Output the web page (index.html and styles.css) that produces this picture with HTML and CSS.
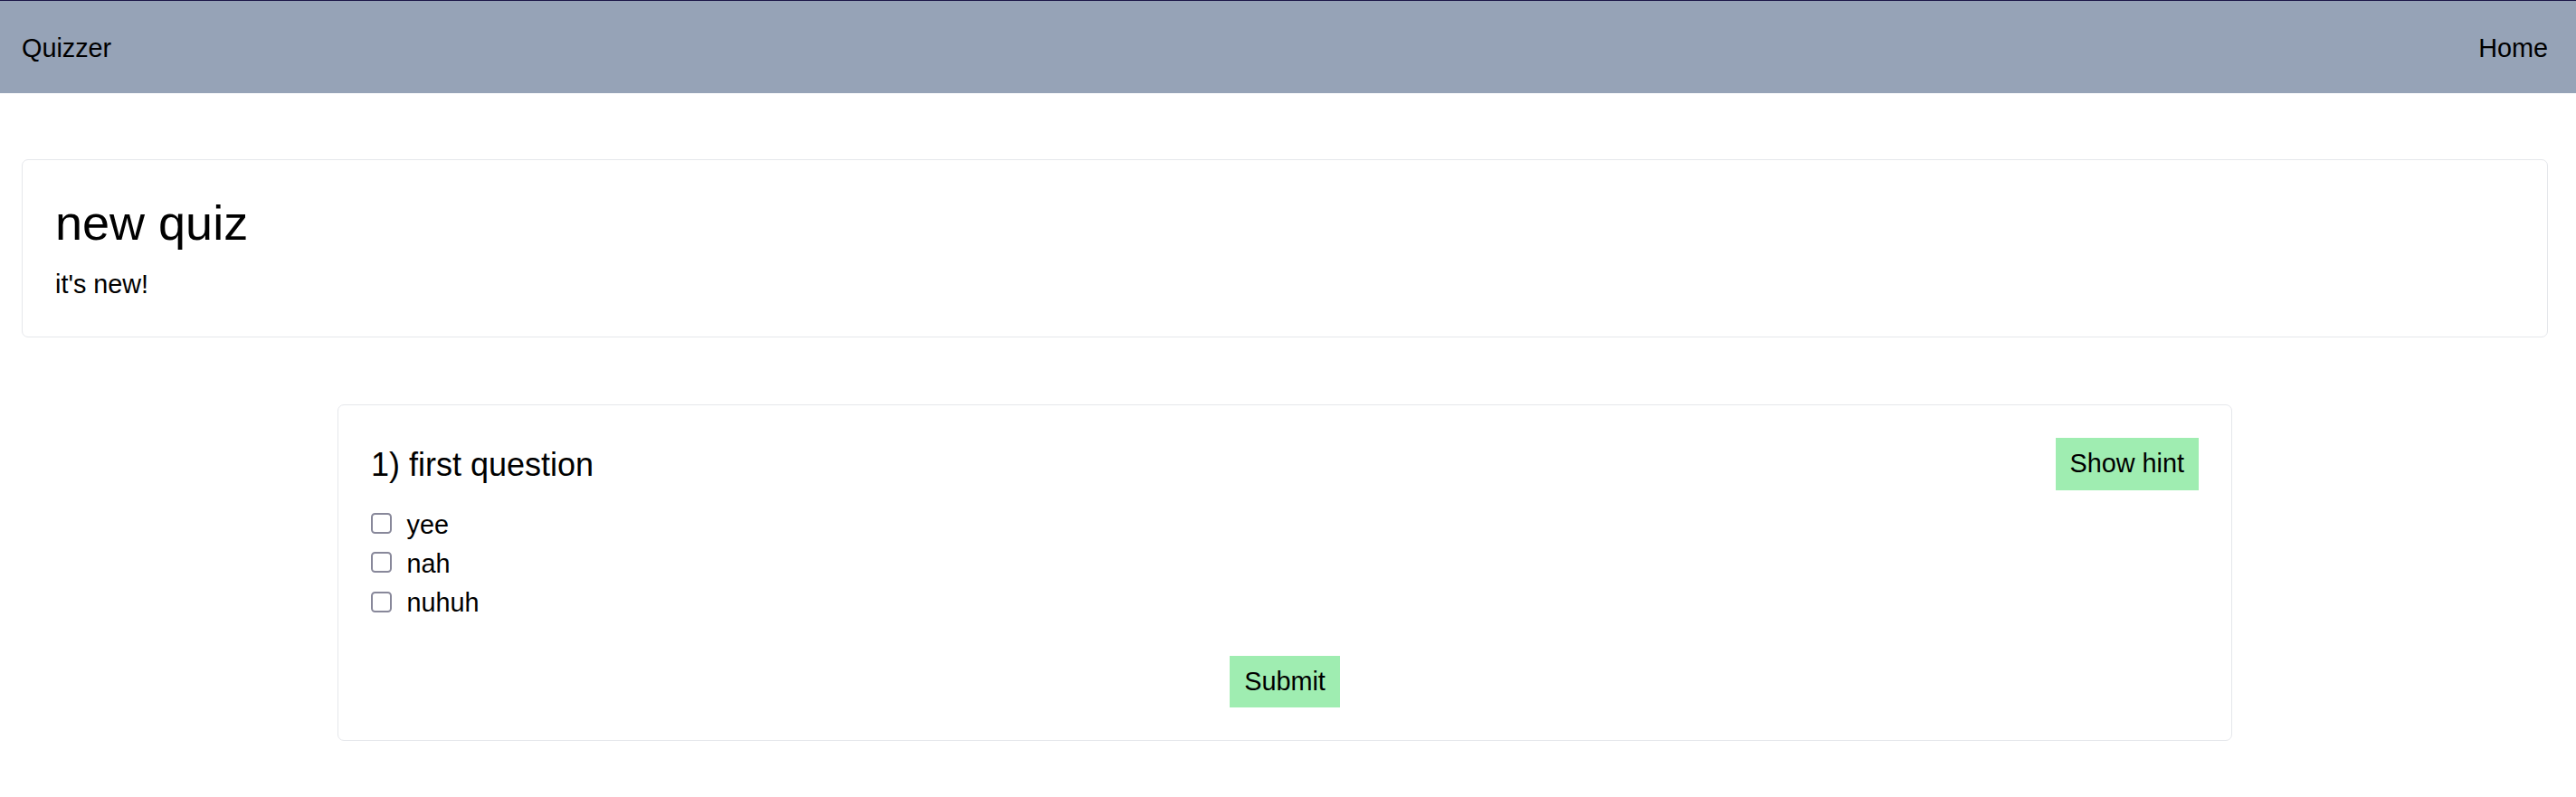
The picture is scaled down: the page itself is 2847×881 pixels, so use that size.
FILE: index.html
```
<!DOCTYPE html>
<html lang="en">
<head>
<meta charset="utf-8">
<title>Quizzer</title>
<link rel="stylesheet" href="styles.css">
</head>
<body>
<nav class="navbar">
  <a class="brand" href="#">Quizzer</a>
  <a class="nav-link" href="#">Home</a>
</nav>
<main class="page">
  <section class="quiz-card">
    <h1 class="quiz-title">new quiz</h1>
    <p class="quiz-desc">it's new!</p>
  </section>
  <section class="question-card">
    <div class="question-head">
      <h2 class="question-title">1) first question</h2>
      <button class="btn" type="button">Show hint</button>
    </div>
    <ul class="options">
      <li><label class="option"><input class="check" type="checkbox"><span>yee</span></label></li>
      <li><label class="option"><input class="check" type="checkbox"><span>nah</span></label></li>
      <li><label class="option"><input class="check" type="checkbox"><span>nuhuh</span></label></li>
    </ul>
    <div class="actions">
      <button class="btn" type="button">Submit</button>
    </div>
  </section>
</main>
</body>
</html>
```
FILE: styles.css
```
* {
  box-sizing: border-box;
}

html, body {
  margin: 0;
  padding: 0;
  background: #ffffff;
}

body {
  font-family: "Liberation Sans", Arial, sans-serif;
  font-size: 28.8px;
  line-height: 43.2px;
  color: #000000;
}

a {
  color: inherit;
  text-decoration: none;
}

.navbar {
  display: flex;
  justify-content: space-between;
  align-items: center;
  background: #96a3b7;
  border-top: 1px solid #1c1748;
  padding: 31px 31px 27.5px 24px;
}

.page {
  padding: 0 31px 40px 24px;
}

.quiz-card {
  margin-top: 73.5px;
  border: 1px solid #e5e7eb;
  border-radius: 7px;
  padding: 37px 36px 35px 36px;
}

.quiz-title {
  margin: 0 0 14.4px 0;
  font-size: 54px;
  line-height: 64.8px;
  font-weight: 400;
}

.quiz-desc {
  margin: 0;
}

.question-card {
  width: 75%;
  margin: 74.5px auto 0 auto;
  border: 1px solid #e5e7eb;
  border-radius: 7px;
  padding: 36px;
}

.question-head {
  display: flex;
  justify-content: space-between;
  align-items: center;
}

.question-title {
  margin: 0;
  font-size: 36px;
  line-height: 50.4px;
  font-weight: 400;
  padding-top: 2px;
}

.btn {
  font-family: inherit;
  font-size: 28.8px;
  line-height: 43.2px;
  color: #000000;
  background: #9fedb1;
  border: none;
  border-radius: 0;
  padding: 7.2px 16px;
  margin: 0;
  cursor: pointer;
}

.options {
  list-style: none;
  margin: 15.5px 0 0 0;
  padding: 0;
}

.option {
  display: flex;
  align-items: center;
  gap: 16.5px;
  height: 43.2px;
}

.option span {
  padding-top: 3px;
}

.check {
  appearance: none;
  -webkit-appearance: none;
  width: 23px;
  height: 23px;
  margin: 0;
  border: 2.8px solid #88889a;
  border-radius: 4.5px;
  background: #ffffff;
  flex: none;
}

.actions {
  display: flex;
  justify-content: center;
  margin-top: 38px;
}
```
